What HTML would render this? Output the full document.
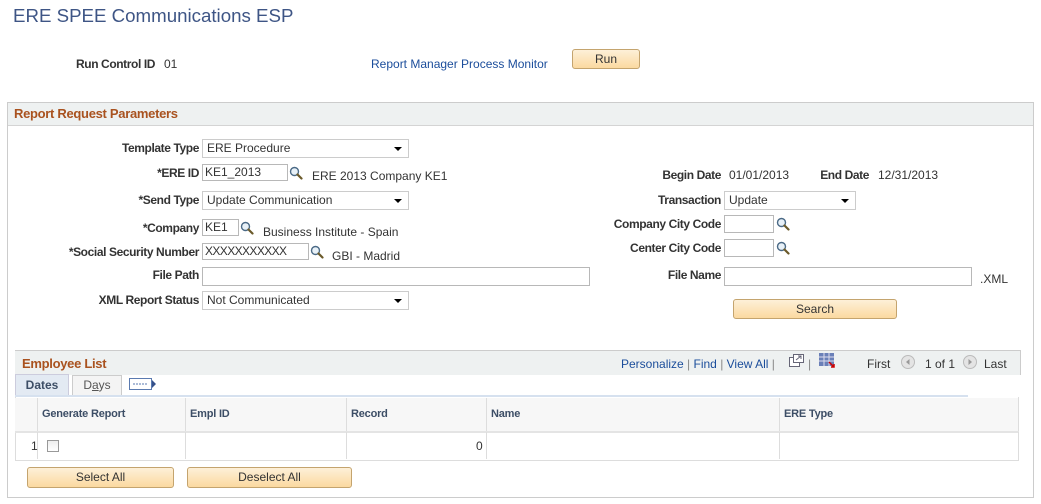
<!DOCTYPE html>
<html><head><meta charset="utf-8"><style>
body{margin:0;width:1041px;height:504px;background:#fff;font-family:"Liberation Sans",Arial,sans-serif;font-size:12px;color:#333;position:relative;overflow:hidden}
.a{position:absolute;white-space:nowrap}
.lbl{position:absolute;font-weight:bold;color:#333;text-align:right;white-space:nowrap;line-height:14px;letter-spacing:-0.4px}
.v{position:absolute;white-space:nowrap;line-height:14px;color:#333}
.in{position:absolute;border:1px solid #b8b8b8;background:#fff;height:17px;box-sizing:border-box;line-height:15px;padding-left:2px}
.sel{position:absolute;border:1px solid #ccc;background:#fff;height:19px;box-sizing:border-box;line-height:17px;padding-left:4px;color:#333}
.sel:after{content:"";position:absolute;right:6px;top:7px;border-left:4px solid transparent;border-right:4px solid transparent;border-top:4px solid #000}
.btn{position:absolute;border:1px solid #c4a46e;border-radius:3px;background:linear-gradient(#fdf0d8,#fbd9a0);text-align:center;box-sizing:border-box;color:#333;line-height:18px}
.ck{position:absolute}
.th{position:absolute;top:398px;height:33px;line-height:33px;font-weight:bold;color:#3d4e66;font-size:11px;padding-left:4px;box-sizing:border-box;border-right:1px solid #ddd;letter-spacing:-0.2px}
.td{position:absolute;top:432px;height:27px;border-right:1px solid #ddd;box-sizing:border-box}
</style></head><body>
<svg width="0" height="0" style="position:absolute"><defs><symbol id="mg" viewBox="0 0 14 14"><circle cx="5.5" cy="5.5" r="4" fill="#e8f1f8" stroke="#4b6a86" stroke-width="1.4"/><path d="M8.5 8.5 L12.5 12.5" stroke="#6b5a2a" stroke-width="2.2" stroke-linecap="round"/></symbol></defs></svg>

<div class="a" style="left:13px;top:5px;font-size:18.7px;color:#3e5585">ERE SPEE Communications ESP</div>
<div class="lbl" style="left:76px;top:57px">Run Control ID</div>
<div class="v" style="left:164px;top:57px">01</div>
<div class="a" style="left:371px;top:57px;color:#1b4d9b">Report Manager Process Monitor</div>
<div class="btn" style="left:572px;top:49px;width:68px;height:20px">Run</div>

<div class="a" style="left:7px;top:102px;width:1027px;height:396px;border:1px solid #ccc;box-sizing:border-box"></div>
<div class="a" style="left:8px;top:103px;width:1025px;height:22px;background:#eef1f1;border-bottom:1px solid #d4d4d4"></div>
<div class="a" style="left:14px;top:106px;font-weight:bold;color:#a9521f;font-size:13px;letter-spacing:-0.3px">Report Request Parameters</div>

<div class="lbl" style="right:842px;top:141px">Template Type</div>
<div class="sel" style="left:202px;top:139px;width:207px">ERE Procedure</div>
<div class="lbl" style="right:842px;top:166px">*ERE ID</div>
<div class="in" style="left:202px;top:164px;width:86px">KE1_2013</div>
<svg class="ck" style="left:289px;top:166px" width="14" height="14"><use href="#mg"/></svg>
<div class="v" style="left:312px;top:169px">ERE 2013 Company KE1</div>
<div class="lbl" style="right:842px;top:193px">*Send Type</div>
<div class="sel" style="left:202px;top:191px;width:207px">Update Communication</div>
<div class="lbl" style="right:842px;top:221px">*Company</div>
<div class="in" style="left:202px;top:219px;width:37px">KE1</div>
<svg class="ck" style="left:240px;top:221px" width="14" height="14"><use href="#mg"/></svg>
<div class="v" style="left:263px;top:225px">Business Institute - Spain</div>
<div class="lbl" style="right:842px;top:245px">*Social Security Number</div>
<div class="in" style="left:202px;top:243px;width:107px;letter-spacing:-0.6px">XXXXXXXXXXX</div>
<svg class="ck" style="left:310px;top:245px" width="14" height="14"><use href="#mg"/></svg>
<div class="v" style="left:332px;top:249px">GBI - Madrid</div>
<div class="lbl" style="right:842px;top:268px">File Path</div>
<div class="in" style="left:202px;top:267px;width:388px;height:19px"></div>
<div class="lbl" style="right:842px;top:293px">XML Report Status</div>
<div class="sel" style="left:202px;top:291px;width:207px">Not Communicated</div>

<div class="lbl" style="right:320px;top:168px">Begin Date</div>
<div class="v" style="left:729px;top:168px">01/01/2013</div>
<div class="lbl" style="right:172px;top:168px">End Date</div>
<div class="v" style="left:878px;top:168px">12/31/2013</div>
<div class="lbl" style="right:320px;top:193px">Transaction</div>
<div class="sel" style="left:724px;top:191px;width:132px">Update</div>
<div class="lbl" style="right:320px;top:217px">Company City Code</div>
<div class="in" style="left:724px;top:215px;width:50px;height:18px"></div>
<svg class="ck" style="left:776px;top:217px" width="14" height="14"><use href="#mg"/></svg>
<div class="lbl" style="right:320px;top:241px">Center City Code</div>
<div class="in" style="left:724px;top:239px;width:50px;height:18px"></div>
<svg class="ck" style="left:776px;top:241px" width="14" height="14"><use href="#mg"/></svg>
<div class="lbl" style="right:320px;top:268px">File Name</div>
<div class="in" style="left:724px;top:267px;width:248px;height:19px"></div>
<div class="v" style="left:980px;top:272px">.XML</div>
<div class="btn" style="left:733px;top:299px;width:164px;height:20px">Search</div>

<div class="a" style="left:15px;top:350px;width:1005px;height:24px;background:#eef1f1;border-top:1px solid #ccc;border-right:1px solid #ccc"></div>
<div class="a" style="left:22px;top:356px;font-weight:bold;color:#a9521f;font-size:13px;letter-spacing:-0.3px">Employee List</div>
<div class="a" style="left:621px;top:357px;color:#1b4d9b">Personalize <span style="color:#888">|</span> Find <span style="color:#888">|</span> View All <span style="color:#888">|</span></div>
<svg class="ck" style="left:789px;top:354px" width="15" height="13"><rect x="0.5" y="3.5" width="10" height="9" fill="#fff" stroke="#667"/><rect x="4.5" y="0.5" width="10" height="8" fill="#fff" stroke="#667"/><path d="M7 6 L12 2 M9 2 H12 V5" stroke="#667" fill="none"/></svg>
<div class="a" style="left:808px;top:357px;color:#888">|</div>
<svg class="ck" style="left:819px;top:353px" width="16" height="15"><rect x="0" y="0" width="15" height="13" fill="#6a80b8"/><path d="M0 4H15M0 8H15M5 0V13M10 0V13" stroke="#dde" /><path d="M10 9 L15 14 M12 14H15V11" stroke="#c00" stroke-width="1.5" fill="none"/></svg>
<div class="a" style="left:867px;top:357px;color:#333">First</div>
<svg class="ck" style="left:901px;top:355px" width="14" height="14"><circle cx="7" cy="7" r="6.5" fill="#e4e4e4" stroke="#bbb"/><path d="M8.5 4 L5 7 L8.5 10Z" fill="#999"/></svg>
<div class="a" style="left:925px;top:357px;color:#333">1 of 1</div>
<svg class="ck" style="left:963px;top:355px" width="14" height="14"><circle cx="7" cy="7" r="6.5" fill="#e4e4e4" stroke="#bbb"/><path d="M5.5 4 L9 7 L5.5 10Z" fill="#999"/></svg>
<div class="a" style="left:984px;top:357px;color:#333">Last</div>

<div class="a" style="left:15px;top:374px;width:54px;height:21px;background:#e3eaf3;border:1px solid #ccd;border-bottom:none;box-sizing:border-box;text-align:center;line-height:20px;color:#3d4e66;font-weight:bold;font-size:12px">Dates</div>
<div class="a" style="left:72px;top:375px;width:50px;height:20px;background:#f4f4f4;border:1px solid #ccc;border-bottom:none;box-sizing:border-box;text-align:center;line-height:19px;color:#555">D<u>a</u>ys</div>
<svg class="ck" style="left:129px;top:378px" width="28" height="13"><rect x="0.5" y="0.5" width="22" height="11" fill="#fff" stroke="#5a7ab0"/><path d="M4 6H19" stroke="#5a7ab0" stroke-dasharray="2 1"/><path d="M23 2 L27 6 L23 10Z" fill="#36518a"/></svg>
<div class="a" style="left:15px;top:395px;width:953px;height:2px;background:#d6e1ef"></div>

<div class="a" style="left:15px;top:397px;width:1004px;height:64px;border:1px solid #ddd;border-top:none;box-sizing:border-box"></div>
<div class="a" style="left:15px;top:398px;width:1004px;height:33px;background:#f7f7f7;border-bottom:2px solid #e4e4e4"></div>
<div class="th" style="left:15px;width:23px"></div>
<div class="th" style="left:38px;width:148px">Generate Report</div>
<div class="th" style="left:186px;width:161px">Empl ID</div>
<div class="th" style="left:347px;width:140px">Record</div>
<div class="th" style="left:487px;width:293px">Name</div>
<div class="th" style="left:780px;width:239px">ERE Type</div>
<div class="td" style="left:15px;width:23px"></div>
<div class="td" style="left:38px;width:148px"></div>
<div class="td" style="left:186px;width:161px"></div>
<div class="td" style="left:347px;width:140px"></div>
<div class="td" style="left:487px;width:293px"></div>
<div class="td" style="left:780px;width:239px"></div>
<div class="v" style="left:31px;top:439px">1</div>
<div class="a" style="left:47px;top:440px;width:12px;height:12px;border:1px solid #999;background:linear-gradient(#eee,#fff);box-sizing:border-box"></div>
<div class="v" style="left:476px;top:439px">0</div>

<div class="btn" style="left:27px;top:467px;width:147px;height:21px;line-height:19px">Select All</div>
<div class="btn" style="left:187px;top:467px;width:165px;height:21px;line-height:19px">Deselect All</div>
</body></html>
